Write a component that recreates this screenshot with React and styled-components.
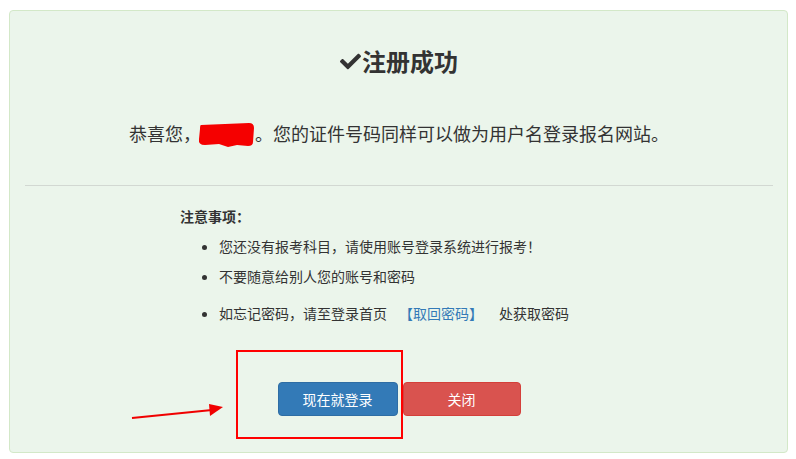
import styled, { createGlobalStyle } from "styled-components";
import { FaCheck } from "react-icons/fa";

const GlobalStyle = createGlobalStyle`
  * { box-sizing: border-box; }
  body {
    margin: 0;
    background: #ffffff;
    font-family: "Noto Sans CJK SC", "Liberation Sans", sans-serif;
    color: #333;
  }
`;

const App = () => {
  return (
    <>
      <GlobalStyle />
      <S.Page>
        <S.Panel>
          <S.Title>
            <FaCheck size={21} />
            注册成功
          </S.Title>
          <S.Message>
            恭喜您，
            <S.Scribble viewBox="0 0 58 25" width="58" height="25">
              <path
                d="M4 3 L52 1 Q57 1 57 6 L56 20 Q56 24 51 24 L40 23 L31 25 L22 22 L8 23 Q1 23 2 17 L3 7 Q3 3 4 3 Z"
                fill="#f50000"
              />
            </S.Scribble>
            。您的证件号码同样可以做为用户名登录报名网站。
          </S.Message>
          <S.Divider />
          <S.Notes>
            <S.NotesTitle>注意事项：</S.NotesTitle>
            <S.List>
              <S.Item>您还没有报考科目，请使用账号登录系统进行报考！</S.Item>
              <S.Item>不要随意给别人您的账号和密码</S.Item>
              <S.Item $spaced>
                如忘记密码，请至登录首页
                <S.Link href="#">【取回密码】</S.Link>
                处获取密码
              </S.Item>
            </S.List>
          </S.Notes>
          <S.Actions>
            <S.Button $variant="primary">现在就登录</S.Button>
            <S.Button $variant="danger">关闭</S.Button>
          </S.Actions>

          <S.Highlight />
          <S.Arrow viewBox="0 0 100 20" width="100" height="20">
            <line x1="2" y1="16" x2="82" y2="8" stroke="#f00000" strokeWidth="2" />
            <polygon points="93,5 79,2 80,14" fill="#f00000" />
          </S.Arrow>
        </S.Panel>
      </S.Page>
    </>
  );
};

export default App;

const Page = styled.div`
  padding: 10px 8px 6px 9px;
`;

const Panel = styled.div`
  position: relative;
  width: 779px;
  height: 443px;
  background-color: #ebf5eb;
  border: 1px solid #d3e8c8;
  border-radius: 4px;
  padding: 0 14px 0 15px;
`;

const Title = styled.h2`
  margin: 36px 0 0;
  height: 28px;
  display: flex;
  align-items: center;
  justify-content: center;
  gap: 1px;
  font-size: 24px;
  line-height: 28px;
  font-weight: bold;
  color: #333;
`;

const Message = styled.p`
  margin: 45px 0 0;
  text-align: center;
  font-size: 18px;
  line-height: 26px;
  color: #333;
`;

const Scribble = styled.svg`
  vertical-align: middle;
  margin-left: -4px;
  margin-top: -4px;
`;

const Divider = styled.hr`
  margin: 38px 0 0;
  border: 0;
  border-top: 1px solid #d2d8d2;
`;

const Notes = styled.div`
  margin: 20px 0 0 155px;
`;

const NotesTitle = styled.div`
  font-size: 14px;
  line-height: 20px;
  font-weight: bold;
`;

const List = styled.ul`
  margin: 10px 0 0;
  padding-left: 39px;
`;

const Item = styled.li`
  font-size: 14px;
  line-height: 20px;
  margin-top: ${({ $spaced }) => ($spaced ? "17px" : "10px")};
  &:first-child {
    margin-top: 0;
  }
`;

const Link = styled.a`
  color: #337ab7;
  text-decoration: none;
  margin: 0 16px 0 12px;
`;

const Actions = styled.div`
  margin-top: 59px;
  display: flex;
  justify-content: center;
  gap: 5px;
`;

const Button = styled.button`
  width: ${({ $variant }) => ($variant === "primary" ? "120px" : "118px")};
  height: 34px;
  border-radius: 4px;
  border: 1px solid
    ${({ $variant }) => ($variant === "primary" ? "#2e6da4" : "#d43f3a")};
  background-color: ${({ $variant }) =>
    $variant === "primary" ? "#337ab7" : "#d9534f"};
  color: #fff;
  font-family: inherit;
  font-size: 14px;
  cursor: pointer;
`;

const Highlight = styled.div`
  position: absolute;
  left: 226px;
  top: 339px;
  width: 167px;
  height: 89px;
  border: 2px solid #ff0000;
`;

const Arrow = styled.svg`
  position: absolute;
  left: 120px;
  top: 391px;
`;

const S = {
  Page,
  Panel,
  Title,
  Message,
  Scribble,
  Divider,
  Notes,
  NotesTitle,
  List,
  Item,
  Link,
  Actions,
  Button,
  Highlight,
  Arrow,
};
